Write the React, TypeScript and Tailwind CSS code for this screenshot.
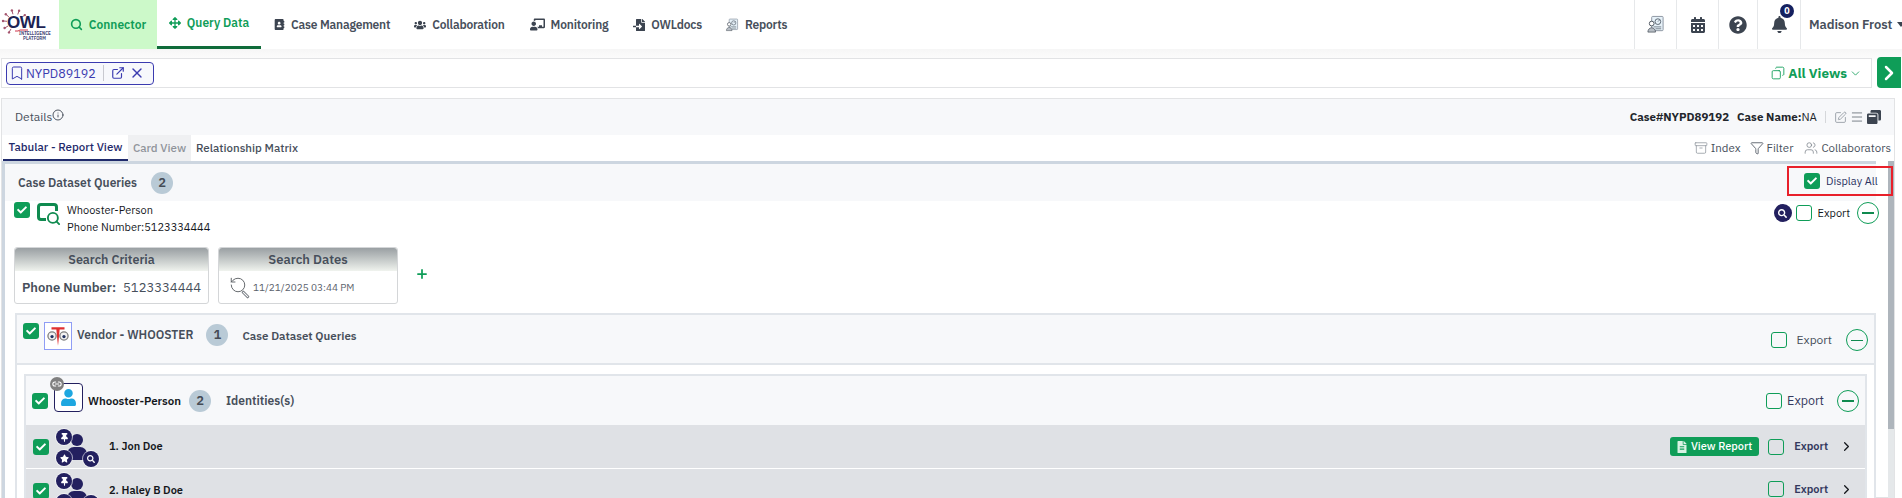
import type { ReactNode } from 'react';
import {
  Archive,
  Bookmark,
  ChevronDown,
  ChevronRight,
  Copy,
  ExternalLink,
  Filter,
  Info,
  Link2,
  Menu,
  Plus,
  RotateCcw,
  Search,
  SquarePen,
  Users,
  X,
} from 'lucide-react';
import {
  FaAddressBook,
  FaArrowsAlt,
  FaBell,
  FaCalendarAlt,
  FaChalkboardTeacher,
  FaCheck,
  FaFileAlt,
  FaFileImport,
  FaQuestionCircle,
  FaSearch,
  FaThumbtack,
  FaStar,
  FaUser,
  FaUsers,
  FaWindowRestore,
} from 'react-icons/fa';

const LOGO_SPOKES = [150, 185, 220, 255, 290, 325, 120];

function GreenCheck({ className = '' }: { className?: string }) {
  return (
    <span className={`flex h-4 w-4 shrink-0 items-center justify-center rounded-[3px] bg-[#0f9d58] ${className}`}>
      <FaCheck className="h-[10px] w-[10px] text-white" />
    </span>
  );
}

function EmptyCheck() {
  return <span className="block h-4 w-4 shrink-0 rounded-[3px] border border-[#0f9d58] bg-transparent" />;
}

function MinusCircle({ thin = false }: { thin?: boolean }) {
  return (
    <span className="flex h-[22px] w-[22px] shrink-0 items-center justify-center rounded-full border border-[#0f9d58]">
      <span className={`w-3 bg-[#0f8a4f] ${thin ? 'h-px' : 'h-[2px]'}`} />
    </span>
  );
}

function CountBadge({ value }: { value: number }) {
  return (
    <span className="flex h-[22px] w-[22px] shrink-0 items-center justify-center rounded-full bg-[#b9cad6] text-[13px] font-semibold text-[#444b55]">
      {value}
    </span>
  );
}

function DocPersonIcon({ className }: { className: string }) {
  return (
    <svg viewBox="0 0 20 20" className={className} fill="none">
      <rect x="6" y="1.500" width="12" height="15" rx="1" fill="#e6f1f8" stroke="#8a94a0" />
      <circle cx="12.500" cy="7" r="3" stroke="#5a6470" />
      <path d="M12.500 7l2-2M8 12.500h8M10 14.500h6" stroke="#5a6470" strokeWidth="0.8" />
      <circle cx="6" cy="9" r="2.500" fill="#fff" stroke="#4a525c" />
      <path d="M2 18c0-3 2-4.500 4-4.500s4 1.500 4 4.500z" fill="#b8bec5" stroke="#4a525c" strokeWidth="0.8" />
    </svg>
  );
}

function OwlLogo() {
  return (
    <div className="relative h-full w-[59px] shrink-0">
      <svg viewBox="0 0 30 34" className="absolute left-[1px] top-[7px] h-[34px] w-[30px]" fill="none" stroke="#a5566f" strokeWidth="1">
        {LOGO_SPOKES.map((deg) => {
          const r = (deg * Math.PI) / 180;
          const x = 14 + Math.cos(r) * 12;
          const y = 15 + Math.sin(r) * 12;
          return (
            <g key={deg}>
              <line x1={14 + Math.cos(r) * 8} y1={15 + Math.sin(r) * 8} x2={x} y2={y} />
              <circle cx={x} cy={y} r="1.200" fill="#a5566f" stroke="none" />
            </g>
          );
        })}
        <path d="M14 24l3 0 2-1h8" stroke="#d0344a" />
      </svg>
      <span className="absolute left-[7px] top-[15px] text-[17px] font-bold leading-[15px] tracking-[-0.4px] text-[#1c2354] [font-family:'Liberation_Sans',sans-serif]">OWL</span>
      <span className="absolute left-[19px] top-[31px] whitespace-nowrap text-[4.500px] font-semibold leading-[4px] text-[#3b3f72]">INTELLIGENCE</span>
      <span className="absolute left-[23px] top-[36px] whitespace-nowrap text-[4.500px] font-semibold leading-[4px] text-[#3b3f72]">PLATFORM</span>
    </div>
  );
}

function NavItem({ icon, label, className = '' }: { icon: ReactNode; label: string; className?: string }) {
  return (
    <div className={`flex items-center gap-[6px] text-xs font-semibold tracking-[-0.2px] text-[#474f5b] ${className}`}>
      {icon}
      <span>{label}</span>
    </div>
  );
}

function RightIcon({ children, width }: { children: ReactNode; width: string }) {
  return <div className={`relative flex h-full items-center justify-center border-l border-[#e6e8ea] ${width}`}>{children}</div>;
}

function PersonCluster() {
  return (
    <div className="relative h-[38px] w-[42px] shrink-0 text-[#23205f]">
      <span className="absolute left-[15px] top-[5px] h-3 w-3 rounded-full bg-[#23205f]" />
      <span className="absolute left-[11px] top-[18px] h-[13px] w-5 rounded-t-[7px] bg-[#23205f]" />
      <span className="absolute left-0 top-0 flex h-4 w-4 items-center justify-center rounded-full bg-[#23205f] ring-1 ring-white/60">
        <FaThumbtack className="h-[9px] w-[9px] text-white" />
      </span>
      <span className="absolute left-0 top-[21px] flex h-4 w-4 items-center justify-center rounded-full bg-[#23205f] ring-1 ring-white/60">
        <FaStar className="h-[9px] w-[9px] text-white" />
      </span>
      <span className="absolute left-[27px] top-[22px] flex h-4 w-4 items-center justify-center rounded-full bg-[#23205f] ring-1 ring-white/60">
        <FaSearch className="h-2 w-2 text-white" />
      </span>
    </div>
  );
}

function VendorIcon() {
  return (
    <div className="flex h-7 w-7 shrink-0 items-center justify-center border border-[#8f9df5] bg-white">
      <svg viewBox="0 0 24 24" className="h-[26px] w-[26px]">
        <circle cx="6.500" cy="12" r="3.800" fill="#f2f2f2" stroke="#7e7e7e" strokeWidth="1.200" />
        <circle cx="17.500" cy="12" r="3.800" fill="#f2f2f2" stroke="#7e7e7e" strokeWidth="1.200" />
        <circle cx="6.500" cy="12.500" r="1.500" fill="#20305f" />
        <circle cx="17.500" cy="12.500" r="1.500" fill="#20305f" />
        <path d="M6 4h12v2h-4.500l-.5 6-1 9-1-9-.5-6H6z" fill="#e03131" />
      </svg>
    </div>
  );
}

function PersonRow({ name, report, height }: { name: string; report?: boolean; height: string }) {
  return (
    <div className={`flex items-start bg-[#dfe1e5] pl-[7px] pr-[11px] ${height} border-b border-white`}>
      <GreenCheck className="mt-[14px]" />
      <div className="ml-[7px] mt-[4px]">
        <PersonCluster />
      </div>
      <span className="ml-[11px] mt-[13px] text-[11px] font-semibold leading-4 text-[#14171c]">{name}</span>
      <div className="ml-auto mt-[12px] flex items-center">
        {report && (
          <span className="mr-[9px] flex h-[19px] w-[89px] items-center justify-center gap-[4px] rounded-[3px] bg-[#0f9d58] text-[11px] font-medium text-white">
            <FaFileAlt className="h-3 w-[10px] text-[#d9f2e4]" />
            View Report
          </span>
        )}
        <EmptyCheck />
        <span className="ml-[10px] text-[11px] font-semibold text-[#34395e]">Export</span>
        <ChevronRight className="ml-[11px] h-[15px] w-[15px] text-[#14171c]" strokeWidth={2} />
      </div>
    </div>
  );
}

export default function App() {
  return (
    <div className="h-[498px] w-[1902px] overflow-hidden bg-white font-['IBM_Plex_Sans','Noto_Sans',sans-serif]">
      <header className="flex h-[49px] items-center bg-white">
        <OwlLogo />
        <div className="flex h-full w-[98px] items-center justify-center gap-[6px] bg-[#ccf9c9] text-xs font-semibold text-[#0f9d58]">
          <Search className="h-[13px] w-[13px]" strokeWidth={3} />
          Connector
        </div>
        <div className="flex h-full w-[104px] items-center justify-center gap-[6px] border-b-[3px] border-[#0f6b3a] text-xs font-semibold text-[#0f9d58]">
          <FaArrowsAlt className="h-3 w-3" />
          Query Data
        </div>
        <NavItem className="ml-[13px]" icon={<FaAddressBook className="h-[11px] w-[11px] text-[#3c4450]" />} label="Case Management" />
        <NavItem className="ml-[24px]" icon={<FaUsers className="h-3 w-3 text-[#3c4450]" />} label="Collaboration" />
        <NavItem className="ml-[25px]" icon={<FaChalkboardTeacher className="h-[13px] w-[15px] text-[#3c4450]" />} label="Monitoring" />
        <NavItem className="ml-[25px]" icon={<FaFileImport className="h-3 w-3 text-[#3c4450]" />} label="OWLdocs" />
        <NavItem className="ml-[23px]" icon={<DocPersonIcon className="h-[14px] w-[14px]" />} label="Reports" />
        <div className="ml-auto flex h-full">
          <RightIcon width="w-[42px]"><DocPersonIcon className="h-[19px] w-[19px]" /></RightIcon>
          <RightIcon width="w-[42px]"><FaCalendarAlt className="h-4 w-4 text-[#3c4450]" /></RightIcon>
          <RightIcon width="w-[39px]"><FaQuestionCircle className="h-[18px] w-[18px] text-[#3c4450]" /></RightIcon>
          <RightIcon width="w-[43px]">
            <FaBell className="h-[17px] w-[17px] text-[#3c4450]" />
            <span className="absolute left-[22px] top-1 flex h-[14px] w-[14px] items-center justify-center rounded-full bg-[#14205f] text-[9px] font-bold text-white">0</span>
          </RightIcon>
          <div className="flex w-[102px] items-center whitespace-nowrap border-l border-[#e6e8ea] pl-2 text-[13px] font-semibold tracking-[-0.1px] text-[#474f5b]">
            Madison Frost
            <span className="ml-[5px] h-0 w-0 border-x-[4px] border-t-[5px] border-x-transparent border-t-[#3c4450]" />
          </div>
        </div>
      </header>

      <div className="flex h-[49px] items-start bg-gradient-to-b from-[#f6f6f6] to-white to-30% pl-[1px] pt-[9px]">
        <div className="flex h-[30px] w-[1871px] items-center border border-[#e2e3e5] bg-white pl-1 pr-[9px]">
          <div className="flex h-[23px] w-[148px] items-center rounded-[4px] border border-[#3b3bb0] bg-[#f7f8fc] pl-[2px] text-[#3b3bb0]">
            <Bookmark className="h-4 w-4" strokeWidth={1.5} />
            <span className="ml-[1px] text-[12.500px]">NYPD89192</span>
            <span className="mx-[7px] h-4 w-px bg-[#c8c9d0]" />
            <ExternalLink className="h-[14px] w-[14px]" strokeWidth={2} />
            <X className="ml-1 h-4 w-4" strokeWidth={2} />
          </div>
          <div className="ml-auto flex items-center text-[13.500px] font-bold text-[#0f9d58]">
            <Copy className="mr-[3px] h-[14px] w-[14px] -scale-x-100" strokeWidth={1.5} />
            All Views
            <ChevronDown className="ml-[2px] h-[13px] w-[13px]" strokeWidth={1.5} />
          </div>
        </div>
        <div className="ml-[5px] -mt-[1px] flex h-[31px] w-[24px] items-center justify-center rounded-l-[4px] bg-[#0f9d58]">
          <ChevronRight className="h-6 w-6 text-white" strokeWidth={2.5} />
        </div>
      </div>

      <div className="ml-[1px] h-[400px] w-[1894px] border border-[#e2e3e5]">
        <div className="flex h-[36px] items-center bg-[#f7f8fa] pl-[13px] pr-[13px]">
          <span className="text-xs text-[#474f5b]">Details</span>
          <Info className="mb-1 h-3 w-3 text-[#3c4450]" strokeWidth={1.8} />
          <div className="ml-auto flex items-center text-[11.500px] font-bold text-[#22262c]">
            <span>Case#NYPD89192</span>
            <span className="ml-2">Case Name:<span className="font-normal">NA</span></span>
            <span className="mx-2 h-3 w-px bg-[#d5d7da]" />
            <SquarePen className="h-[13px] w-[13px] text-[#8d949c]" strokeWidth={1.5} />
            <Menu className="ml-[3px] h-[14px] w-[14px] text-[#6b727a]" strokeWidth={1.5} />
            <FaWindowRestore className="ml-[3px] h-[14px] w-[14px] text-[#3c4450]" />
          </div>
        </div>

        <div className="flex h-[26px] items-center pr-[3px] text-[11.500px] font-medium text-[#474f5b]">
          <div className="ml-[1px] flex h-[27px] w-[125px] items-center justify-center border-b-[3px] border-[#1f2a6b] text-[#1f2a6b]">Tabular - Report View</div>
          <div className="flex h-[27px] w-[63px] items-center justify-center bg-[#eff0f2] text-[#8f949b]">Card View</div>
          <div className="ml-[5px]">Relationship Matrix</div>
          <div className="ml-auto flex items-center font-normal">
            <Archive className="mr-[3px] h-[14px] w-[14px] text-[#8d949c]" strokeWidth={1.3} />
            Index
            <Filter className="ml-[10px] mr-[2px] h-[14px] w-[14px]" strokeWidth={1.4} />
            Filter
            <Users className="ml-[11px] mr-[3px] h-[14px] w-[14px] text-[#7b828a]" strokeWidth={1.3} />
            Collaborators
          </div>
        </div>

        <div className="flex h-[337px]">
          <div className="min-w-0 flex-1 border-l-[3px] border-t-[3px] border-[#cdd6e0] bg-white">
            <div className="flex h-[37px] items-start justify-between bg-[#f7f8fa] pl-[13px]">
              <div className="mt-[8px] flex items-center gap-[14px] text-xs font-semibold text-[#474f5b]">
                Case Dataset Queries
                <CountBadge value={2} />
              </div>
              <div className="relative z-10 mr-[-17px] mt-[2px] flex h-[30px] w-[106px] items-center border-2 border-[#e8202a] pl-[15px]">
                <GreenCheck />
                <span className="ml-[6px] text-[11px] text-[#2a3160]">Display All</span>
              </div>
            </div>

            <div className="flex h-[46px] items-start pl-[9px]">
              <GreenCheck className="mt-[1px]" />
              <div className="relative ml-[7px] mt-[2px] h-[20px] w-[22px] text-[#0f8a4f]">
                <span className="absolute left-0 top-0 h-[18px] w-[21px] rounded-[4px] border-[3px] border-[#0f8a4f]" />
                <Search className="absolute bottom-[-3px] right-[-2px] h-[15px] w-[15px] bg-white" strokeWidth={3} />
              </div>
              <div className="ml-2 mt-[1px] text-[11px] leading-[17px] text-[#14171c]">
                <div>Whooster-Person</div>
                <div>Phone Number:5123334444</div>
              </div>
              <div className="ml-auto mr-[-3px] mt-[1px] flex items-center">
                <span className="flex h-[18px] w-[18px] items-center justify-center rounded-full bg-[#23205f]">
                  <FaSearch className="h-[9px] w-[9px] text-white" />
                </span>
                <span className="ml-[4px]"><EmptyCheck /></span>
                <span className="ml-[6px] text-[11px] text-[#14171c]">Export</span>
                <span className="ml-[7px]"><MinusCircle /></span>
              </div>
            </div>

            <div className="flex h-[66px] items-start pl-[9px]">
              <div className="h-[57px] w-[195px] rounded-[3px] border border-[#d4d6d8]">
                <div className="flex h-[23px] items-center justify-center rounded-t-[3px] bg-gradient-to-b from-[#9aa0a3] to-[#f0f3ee] text-[12.500px] font-semibold text-[#474f5b]">Search Criteria</div>
                <div className="flex h-[33px] items-center justify-center gap-[7px] text-[13px] text-[#474f5b]">
                  <span className="font-semibold">Phone Number:</span>
                  <span>5123334444</span>
                </div>
              </div>
              <div className="ml-[9px] h-[57px] w-[180px] rounded-[3px] border border-[#d4d6d8]">
                <div className="flex h-[23px] items-center justify-center rounded-t-[3px] bg-gradient-to-b from-[#9aa0a3] to-[#f0f3ee] text-[13px] font-semibold text-[#474f5b]">Search Dates</div>
                <div className="flex h-[33px] items-center pl-[10px] text-[10px] text-[#5a616b]">
                  <span className="relative mr-[4px] h-[23px] w-5">
                    <RotateCcw className="h-[18px] w-[18px] text-[#55595e]" strokeWidth={1.2} />
                    <span className="absolute left-[15px] top-[14px] h-[9px] w-[3px] -rotate-45 rounded-[1px] border border-[#777c82] bg-white" />
                  </span>
                  11/21/2025 03:44 PM
                </div>
              </div>
              <Plus className="ml-[17px] mt-[20px] h-[14px] w-[14px] text-[#0f9d58]" strokeWidth={3} />
            </div>

            <div className="ml-[10px] border-2 border-[#e1e5ea] bg-white">
              <div className="flex h-[50px] items-start border-b-2 border-[#e1e5ea] bg-[#f7f8fa] pl-[6px] pr-[6px]">
                <GreenCheck className="mt-[8px]" />
                <div className="ml-[5px] mt-[7px]"><VendorIcon /></div>
                <span className="ml-[5px] mt-[12px] text-xs font-semibold text-[#474f5b]">Vendor - WHOOSTER</span>
                <span className="ml-[13px] mt-[9px]"><CountBadge value={1} /></span>
                <span className="ml-[14px] mt-[12px] text-[11.500px] font-semibold text-[#474f5b]">Case Dataset Queries</span>
                <div className="ml-auto mt-[14px] flex items-center">
                  <EmptyCheck />
                  <span className="ml-[10px] text-xs text-[#474f5b]">Export</span>
                  <span className="ml-[14px]"><MinusCircle thin /></span>
                </div>
              </div>

              <div className="mx-[7px] mt-[9px] border-x-2 border-t-2 border-[#e1e5ea]">
                <div className="flex h-[49px] items-center bg-[#f7f8fa] pl-[6px] pr-[6px]">
                  <GreenCheck />
                  <div className="relative ml-[6px] -mt-[7px] flex h-[29px] w-[29px] shrink-0 items-center justify-center rounded-[4px] border border-[#23205f] bg-white">
                    <FaUser className="h-[17px] w-[17px] text-[#1ea7e0]" />
                    <span className="absolute -left-[5px] -top-[7px] flex h-[14px] w-[14px] items-center justify-center rounded-full bg-[#808080]">
                      <Link2 className="h-[10px] w-[10px] text-white" strokeWidth={2.5} />
                    </span>
                  </div>
                  <span className="ml-[5px] text-[11.500px] font-semibold text-[#14171c]">Whooster-Person</span>
                  <span className="ml-2"><CountBadge value={2} /></span>
                  <span className="ml-[15px] text-xs font-semibold text-[#474f5b]">Identities(s)</span>
                  <div className="ml-auto flex items-center">
                    <EmptyCheck />
                    <span className="ml-[5px] text-[12.500px] text-[#34395e]">Export</span>
                    <span className="ml-[13px]"><MinusCircle /></span>
                  </div>
                </div>
                <PersonRow name="1. Jon Doe" report height="h-[44px]" />
                <PersonRow name="2. Haley B Doe" height="h-[44px]" />
              </div>
            </div>
          </div>

          <div className="flex w-[18px] shrink-0 justify-end">
            <div className="w-[6px] bg-[#e5e8ea]">
              <div className="h-[268px] bg-[#aeb5bc]" />
            </div>
          </div>
        </div>
      </div>
    </div>
  );
}
